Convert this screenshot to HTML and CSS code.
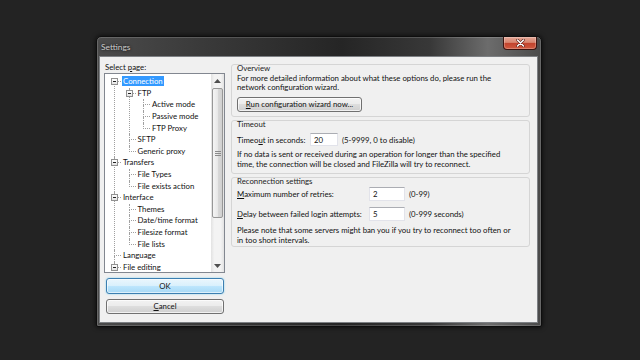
FILE: index.html
```html
<!DOCTYPE html>
<html lang="en">
<head>
    <meta charset="UTF-8">
    <title>Settings</title>
    <link rel="stylesheet" href="styles.css">
</head>
<body>
<div class="desktop">
    <div class="window">
        <div class="titlebar">
            <span class="title">Settings</span>
            <div class="close">
                <svg width="9" height="8" viewBox="0 0 9 8">
                    <path d="M1.5 1 L7.5 7 M7.5 1 L1.5 7" stroke="#5a1c14" stroke-width="2.6" stroke-linecap="round"/>
                    <path d="M1.5 1 L7.5 7 M7.5 1 L1.5 7" stroke="#ffffff" stroke-width="1.5" stroke-linecap="round"/>
                </svg>
            </div>
        </div>
        <div class="client">
            <div class="left">
                <div class="caption">Select <u>p</u>age:</div>
                <div class="treebox">
                    <div class="tree-wrap">
                        <ul class="tree">
                            <li><div class="row"><span class="box"></span><span class="label sel">Connection</span></div>
                                <ul>
                                    <li><div class="row"><span class="box"></span><span class="label">FTP</span></div>
                                        <ul>
                                            <li><div class="row"><span class="label">Active mode</span></div></li>
                                            <li><div class="row"><span class="label">Passive mode</span></div></li>
                                            <li><div class="row"><span class="label">FTP Proxy</span></div></li>
                                        </ul>
                                    </li>
                                    <li><div class="row"><span class="label">SFTP</span></div></li>
                                    <li><div class="row"><span class="label">Generic proxy</span></div></li>
                                </ul>
                            </li>
                            <li><div class="row"><span class="box"></span><span class="label">Transfers</span></div>
                                <ul>
                                    <li><div class="row"><span class="label">File Types</span></div></li>
                                    <li><div class="row"><span class="label">File exists action</span></div></li>
                                </ul>
                            </li>
                            <li><div class="row"><span class="box"></span><span class="label">Interface</span></div>
                                <ul>
                                    <li><div class="row"><span class="label">Themes</span></div></li>
                                    <li><div class="row"><span class="label">Date/time format</span></div></li>
                                    <li><div class="row"><span class="label">Filesize format</span></div></li>
                                    <li><div class="row"><span class="label">File lists</span></div></li>
                                </ul>
                            </li>
                            <li><div class="row"><span class="label">Language</span></div></li>
                            <!-- more pages follow below, the root line keeps going -->
                            <li class="cont"><div class="row"><span class="box"></span><span class="label">File editing</span></div></li>
                        </ul>
                    </div>
                    <div class="vscroll">
                        <div class="arrow">
                            <svg width="7" height="4" viewBox="0 0 7 4"><polygon points="0,4 3.5,0 7,4" fill="#4f4f4f"/></svg>
                        </div>
                        <div class="thumb">
                            <svg width="6" height="5" viewBox="0 0 6 5">
                                <path d="M0 0.5 H6 M0 2.5 H6 M0 4.5 H6" stroke="#8a8a8a" stroke-width="1"/>
                            </svg>
                        </div>
                        <div class="track"></div>
                        <div class="arrow">
                            <svg width="7" height="4" viewBox="0 0 7 4"><polygon points="0,0 7,0 3.5,4" fill="#4f4f4f"/></svg>
                        </div>
                    </div>
                </div>
                <div class="btn btn-ok">OK</div>
                <div class="btn btn-cancel"><u>C</u>ancel</div>
            </div>

            <div class="right">
                <div class="group overview">
                    <div class="group-title">Overview</div>
                    <div class="text">For more detailed information about what these options do, please run the<br>network configuration wizard.</div>
                    <div class="btn btn-wizard"><u>R</u>un configuration wizard now...</div>
                </div>

                <div class="group timeout">
                    <div class="group-title">Timeout</div>
                    <div class="field-row">
                        <span class="field-label t-label">Timeo<u>u</u>t in seconds:</span>
                        <input class="field t-field" type="text" value="20">
                        <span class="hint">(5-9999, 0 to disable)</span>
                    </div>
                    <div class="text">If no data is sent or received during an operation for longer than the specified<br>time, the connection will be closed and FileZilla will try to reconnect.</div>
                </div>

                <div class="group recon">
                    <div class="group-title">Reconnection settings</div>
                    <div class="field-row r1">
                        <span class="field-label r-label"><u>M</u>aximum number of retries:</span>
                        <input class="field r-field" type="text" value="2">
                        <span class="hint">(0-99)</span>
                    </div>
                    <div class="field-row r2">
                        <span class="field-label r-label"><u>D</u>elay between failed login attempts:</span>
                        <input class="field r-field" type="text" value="5">
                        <span class="hint">(0-999 seconds)</span>
                    </div>
                    <div class="text">Please note that some servers might ban you if you try to reconnect too often or<br>in too short intervals.</div>
                </div>
            </div>
        </div>
    </div>
</div>
</body>
</html>
```

FILE: styles.css
```css
*, *::before, *::after {
    box-sizing: border-box;
}

body {
    margin: 0;
    background-color: #232323;
    font-family: "Lato", "Liberation Sans", sans-serif;
    font-size: 7.8px;
    color: #111;
}

.desktop {
    width: 640px;
    height: 360px;
    padding: 36px 0 0 96px;
    overflow: hidden;
}

/* window frame */
.window {
    width: 446px;
    height: 291px;
    display: flex;
    flex-direction: column;
    padding: 0 4px 4px 3px;
    border: 1px solid #0e0e0e;
    border-radius: 5px 5px 2px 2px;
    background-image: linear-gradient(to right, #4b4b4b 0%, #393939 25%, #252525 55%, #383838 75%, #6c6c6c 88%, #4a4a4a 100%);
    box-shadow: inset 0 0 0 1px rgba(255, 255, 255, 0.16), 0 0 5px rgba(0, 0, 0, 0.8);
}

.titlebar {
    height: 20px;
    display: flex;
    justify-content: space-between;
}

.title {
    padding-left: 1px;
    margin-top: 5px;
    line-height: 10px;
    font-size: 8.4px;
    color: #cdcdcd;
    text-shadow: 0 0 3px #000;
}

.close {
    width: 34px;
    height: 13px;
    display: flex;
    align-items: center;
    justify-content: center;
    border: 1px solid #3b1410;
    border-top: none;
    border-radius: 0 0 4px 4px;
    background-image: linear-gradient(#e4a696 0%, #d88670 45%, #c2432d 52%, #d05a40 100%);
    box-shadow: inset 0 0 0 1px rgba(255, 255, 255, 0.25);
}

.client {
    flex: 1;
    display: grid;
    grid-template-columns: 131px 1fr;
    background-color: #f0f0f0;
    box-shadow: 0 0 0 1px #7d8084;
}

/* left side */
.left {
    padding: 5.5px 0 0 4px;
}

.caption {
    padding-left: 1px;
    line-height: 9.5px;
}

.treebox {
    margin-top: 1px;
    width: 121px;
    height: 200px;
    display: flex;
    border: 1px solid #828790;
    background-color: #fff;
}

.tree-wrap {
    flex: 1;
    overflow: hidden;
}

.tree,
.tree ul {
    list-style: none;
    margin: 0;
    padding: 0;
}

.tree {
    padding: 2.2px 0 0 9px;
}

.tree ul {
    margin-left: 14.5px;
}

.tree li {
    position: relative;
}

.tree li::before {
    content: "";
    position: absolute;
    left: 0;
    top: 0;
    width: 7px;
    height: 6px;
    border-left: 1px dotted #a0a0a0;
    border-bottom: 1px dotted #a0a0a0;
}

.tree li::after {
    content: "";
    position: absolute;
    left: 0;
    top: 6px;
    bottom: 0;
    border-left: 1px dotted #a0a0a0;
}

.tree li:last-child::after {
    display: none;
}

.tree li.cont::after {
    display: block;
    bottom: -20px;
}

.tree > li:first-child::before {
    border-left: none;
}

.row {
    position: relative;
    height: 11.6px;
    line-height: 11.6px;
    padding-left: 8px;
    white-space: nowrap;
}

.label {
    position: relative;
    padding: 0 1px;
}

.label.sel {
    background-color: #3399ff;
    color: #fff;
}

.box {
    position: absolute;
    left: -3px;
    top: 2px;
    width: 7px;
    height: 7px;
    z-index: 1;
    border: 1px solid #919191;
    background-image: linear-gradient(#ffffff, #e4e4e4);
}

.box::after {
    content: "";
    position: absolute;
    left: 1px;
    top: 2px;
    width: 3px;
    height: 1px;
    background-color: #222;
}

.vscroll {
    width: 13px;
    display: flex;
    flex-direction: column;
    align-items: center;
    background-image: linear-gradient(to right, #e2e2e2, #f3f3f3 25%, #f3f3f3 75%, #e2e2e2);
}

.arrow {
    height: 13px;
    width: 100%;
    display: flex;
    align-items: center;
    justify-content: center;
}

.thumb {
    margin-top: 1px;
    width: 11px;
    height: 130px;
    display: flex;
    align-items: center;
    justify-content: center;
    border: 1px solid #979797;
    border-radius: 2px;
    background-image: linear-gradient(to right, #f5f5f5, #e8e8e8 50%, #d9d9d9 51%, #d0d0d0);
}

.track {
    flex: 1;
}

/* buttons */
.btn {
    text-align: center;
    border: 1px solid #707070;
    border-radius: 3px;
    background-image: linear-gradient(#f2f2f2 0%, #ebebeb 49%, #dddddd 50%, #cfcfcf 100%);
    box-shadow: inset 0 0 0 1px rgba(255, 255, 255, 0.7);
    white-space: nowrap;
}

.btn-ok {
    margin: 5px 0 0 2px;
    width: 118px;
    height: 16px;
    line-height: 14px;
    border-color: #3c7fb1;
    background-image: linear-gradient(#eaf6fd 0%, #d9f0fc 49%, #bee6fd 50%, #a7d9f5 100%);
    box-shadow: inset 0 0 0 1px rgba(255, 255, 255, 0.6), 0 0 2px #7ed0f0;
}

.btn-cancel {
    margin: 5px 0 0 2px;
    width: 118px;
    height: 15px;
    line-height: 13px;
}

.btn-wizard {
    margin-top: 4.5px;
    width: 125px;
    height: 15px;
    line-height: 13px;
}

/* right side */
.right {
    padding: 7px 7px 0 0;
}

.group {
    border: 1px solid #d5d5d5;
    border-radius: 3px;
    padding: 0 5px 4px 5px;
}

.group + .group {
    margin-top: 3px;
}

.group-title {
    margin-top: -1px;
    line-height: 9.5px;
    color: #222;
}

.text {
    line-height: 9.5px;
    white-space: nowrap;
}

.field-row {
    display: flex;
    align-items: center;
}

.field-label {
    white-space: nowrap;
}

.field {
    margin: 0;
    padding: 0 0 0 3px;
    font: inherit;
    color: #111;
    background-color: #fff;
    border: 1px solid #e2e3ea;
    border-top-color: #abadb3;
    outline: none;
}

.hint {
    margin-left: 4px;
    white-space: nowrap;
}

.timeout .field-row {
    margin-top: 3.5px;
    height: 13px;
}

.t-label {
    width: 73px;
}

.t-field {
    width: 28px;
    height: 13px;
}

.timeout .text {
    margin-top: 4px;
}

.recon {
    padding-bottom: 1px;
}

.r1 {
    margin-top: 0.5px;
}

.r2 {
    margin-top: 6px;
}

.r-label {
    width: 132px;
}

.r-field {
    width: 36px;
    height: 14px;
}

.recon .text {
    margin-top: 5px;
}
```
